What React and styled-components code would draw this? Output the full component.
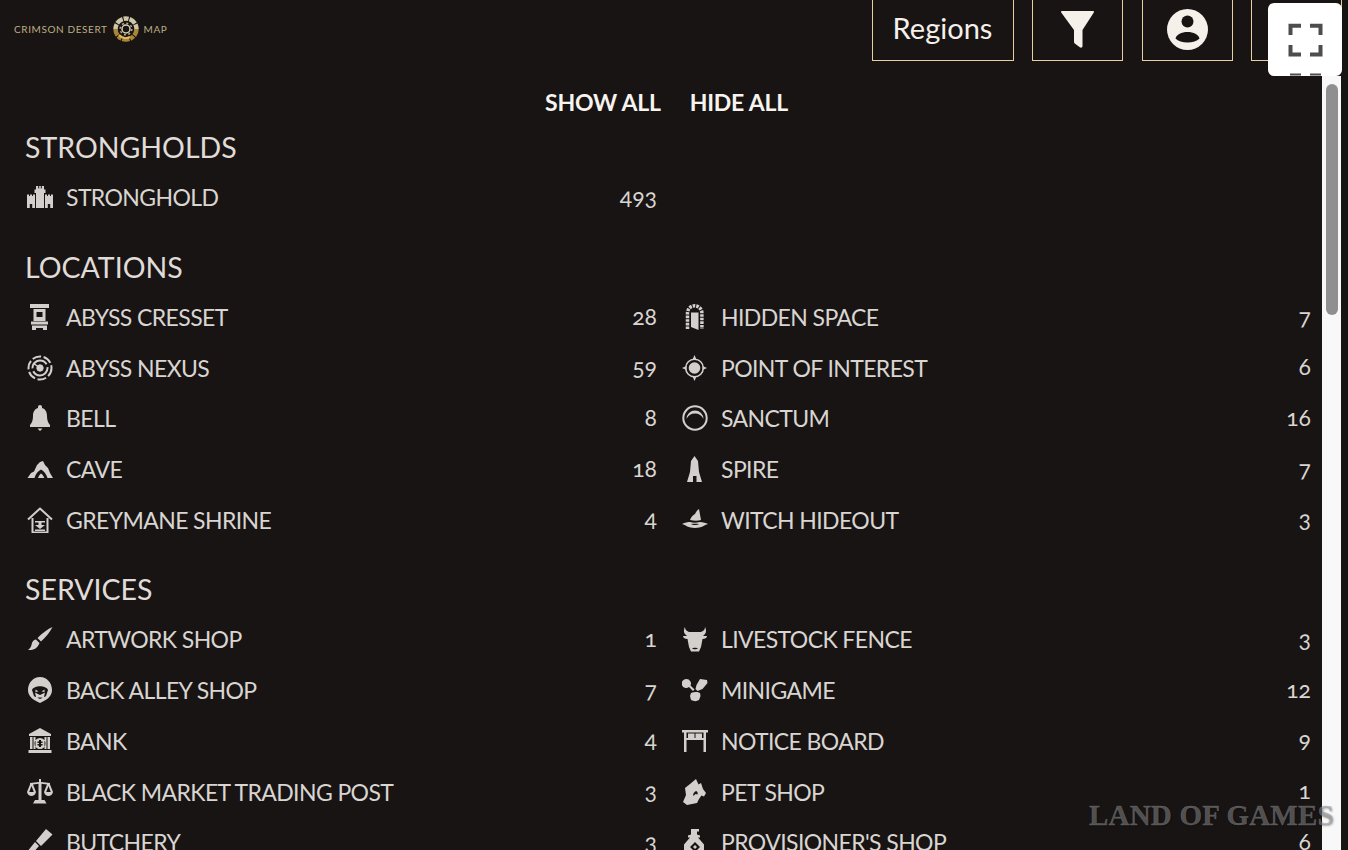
// App.jsx
import React from 'react';
import styled, { createGlobalStyle } from 'styled-components';

const GlobalStyle = createGlobalStyle`
  html, body {
    margin: 0;
    height: 100%;
    background: #181414;
    overflow: hidden;
  }
`;

const icons = {
  stronghold: (
    <path d="M9 2h2.200v2.500h1V2h1.600v2.500h1V2H17v3.500h1.500V9H17v15H9V9H7.500V5.500H9zM0 10.500h2v1.500h1v-1.500h2V12h1v-1.500h2V24H5.200v-4H2.800v4H0zM18 10.500h2V12h1v-1.500h2V12h1v-1.500h2V24h-2.800v-4h-2.400v4H18z" />
  ),
  cresset: (
    <path d="M3 0h19v4H3zM6.500 5h12v12h-12zM9.500 8v5h6V8zM4 17.500h17v3h-17zM5 21.500h15V26h-4v-2h-7v2H5z" fillRule="evenodd" />
  ),
  nexus: (
    <g fill="none" stroke="currentColor">
      <circle cx="13" cy="13" r="11.500" strokeWidth="2" strokeDasharray="9 2.500" />
      <circle cx="13" cy="13" r="7.500" strokeWidth="2" strokeDasharray="20 3" />
      <circle cx="13" cy="13" r="3.200" fill="currentColor" strokeWidth="1" />
      <path d="M13 13 L6 8" strokeWidth="1.500" />
    </g>
  ),
  bell: (
    <path d="M13 0c1.200 0 2 .8 2 2v1c3.500 1 5 4 5 8 0 4 1 7 3 9v2H3v-2c2-2 3-5 3-9 0-4 1.500-7 5-8V2c0-1.200.8-2 2-2zM10.500 23.500h5L13 26z" />
  ),
  cave: (
    <path d="M0.500 22L4 17l3-1.500L10 9l3-3 3-1 2 4 3 3 2 5 3 5h-5.500c-1-3.500-3.500-7-6.500-8.500-3 1.500-5.500 4.500-6.500 8.500zM11 22c.5-1.800 1.800-3.500 3-4.500 1.500 1 2.800 2.700 3.300 4.500z" />
  ),
  shrine: (
    <g>
      <path d="M1 12.500L13 1.500l12 11" fill="none" stroke="currentColor" strokeWidth="2" />
      <path d="M5.500 11v14.500h15V11" fill="none" stroke="currentColor" strokeWidth="2" />
      <path d="M8 14h10v1.500h-3.500V18H18l-5 4-5-4h3.500v-2.500H8zM8 22.500h10V24H8z" />
    </g>
  ),
  hidden: (
    <g>
      <path d="M5.500 25V9a7.200 7.200 0 0 1 14.400 0v16" fill="none" stroke="currentColor" strokeWidth="3.500" strokeDasharray="2.600 1" />
      <path d="M9 8.500h7.500V26L9 23z" />
    </g>
  ),
  poi: (
    <g>
      <circle cx="12.500" cy="13" r="5.800" />
      <circle cx="12.500" cy="13" r="8.800" fill="none" stroke="currentColor" strokeWidth="1.500" />
      <path d="M12.500 0l2 4.500h-4zM12.500 26l-2-4.500h4zM0 13l4.500-2v4zM25 13l-4.500 2v-4z" />
    </g>
  ),
  sanctum: (
    <g>
      <circle cx="13" cy="13" r="11.700" fill="none" stroke="currentColor" strokeWidth="2" />
      <path d="M4.500 14a8.500 8.500 0 0 1 17 0c-1.500-3.500-4.500-5.500-8.500-5.500S6 10.500 4.500 14z" />
    </g>
  ),
  spire: (
    <path d="M12.500 0L16 5l1 11 3 10h-5.500v-6h-3.500v6H5l3-10 1-11z" />
  ),
  witch: (
    <g>
      <path d="M17 2l2 11c-3 1-7 1-11 0 1-3 3-5 5-6 1-2 2-4 4-5z" />
      <path d="M0 17c3-1.500 6-2 8-2 3 1 6 1 10 0 3 0 6 1 8 2-4 1-6 4-13 4S4 18 0 17zM9 17c2 1.300 6 1.300 8 0-3-.5-5-.5-8 0z" fillRule="evenodd" />
    </g>
  ),
  brush: (
    <path d="M25.500 1C21 3 15 7 10.500 12l3.500 3.500C19 11 23 6 25.500 1zM9 13.500c-3.500.5-4 3.500-4.500 5.500-.5 2-2 4-3.500 5 4 .5 9-.5 11.500-7z" />
  ),
  alley: (
    <path d="M13 0c7 0 12 6 12 13 0 6-5 10-12 13C6 23 1 19 1 13 1 6 6 0 13 0zM5 13c2-5 14-5 16 0l-2 6c-2 2-10 2-12 0zM8 15.500l5 2.500 5-2.500-1 4.500-4 2-4-2zM8.500 12.500l3 2-3 .5zM17.500 12.500l-3 2 3 .5z" fillRule="evenodd" />
  ),
  bank: (
    <path d="M13 0l11 6v2H2V6zM3 9h2.500v12H3zM20.500 9H23v12h-2.500zM13 10a5.500 5.500 0 1 1 0 11 5.500 5.500 0 0 1 0-11zM12 12v1.500h-1.500V15H12v1h-1.500v1.500H12V19h2v-1.500h1.500V16H14v-1h1.500v-1.500H14V12zM6.500 9h2v12h-2zM17.500 9h2v12h-2zM1.500 22h23v3h-23z" fillRule="evenodd" />
  ),
  scales: (
    <path d="M12 0h2v3l9 1v1.500l3 7.500c-.5 2.500-2.500 4-4.500 4S17.500 15.500 17 13l3-7.500-5.500-.7V21h3l2 3.500H6L8 21h3.500V4.800L6 5.500 9 13c-.5 2.500-2.500 4-4.500 4S.5 15.500 0 13l3-7.500V4l9-1zM4.500 7L2.200 13h4.600zM21.500 7l-2.300 6h4.600z" fillRule="evenodd" />
  ),
  cleaver: (
    <path d="M19 0l6.500 5.500L14 17l-5-5zM8 13l4 4-8 9H0v-3z" />
  ),
  bull: (
    <path d="M3 1c0 2 1 4 4 5h12c3-1 4-3 4-5 1.500 3 1.500 6-1 8l-1 1h4c0 2-2 3-4.500 3L19 21l-2 4.500H9L7 21l-1.500-8C3 13 1 12 1 10h4L4 9C1.500 7 1.500 4 3 1zM10 22.500c1 1 5 1 6 0-1-1-5-1-6 0z" fillRule="evenodd" />
  ),
  minigame: (
    <path d="M4.500 2a4.500 4.500 0 0 1 4 6.500l4 4-1.500 1.500-4-4A4.500 4.500 0 1 1 4.500 2zM18 2l7 1 .5 3-5 6-5 2-2-2 1-4zM9 16c3-1.500 7-1.500 9 0l.5 3-1.500 4c-2.500 1.500-5 1.500-8 0l-1-4z" />
  ),
  notice: (
    <path d="M0 2h26v2.500h-2V24h-2.500V12h-17v12H2V4.500H0zM4.500 4.500V10h17V4.500zM6 5.500h6.500V10H6zM13.500 5.500H20V10h-6.500z" fillRule="evenodd" />
  ),
  pet: (
    <path d="M14 0l2.500 5.500L19 4l2 6 3 4-2 3.500-2.500-1L17 20l-2 4-10 2-4-3 3-7-1-7 5-4zM14 12c-2 1-3.500 3-2.500 5l2-2 2 .5c.5-2 0-3-1.500-3.500z" fillRule="evenodd" />
  ),
  bag: (
    <path d="M9 0h8v2.500h-2v3l3 1v2h-2l6 7v6l-3 4.500H5L2 21.500v-6l6-7H6v-2l3-1v-3H9zM13 13l-5 5 5 5 5-5zM13 16l2 2-2 2-2-2z" fillRule="evenodd" />
  ),
};

const sections = [
  {
    title: 'STRONGHOLDS',
    rows: [['stronghold', 'STRONGHOLD', '493']],
  },
  {
    title: 'LOCATIONS',
    rows: [
      ['cresset', 'ABYSS CRESSET', '28'],
      ['hidden', 'HIDDEN SPACE', '7'],
      ['nexus', 'ABYSS NEXUS', '59'],
      ['poi', 'POINT OF INTEREST', '6'],
      ['bell', 'BELL', '8'],
      ['sanctum', 'SANCTUM', '16'],
      ['cave', 'CAVE', '18'],
      ['spire', 'SPIRE', '7'],
      ['shrine', 'GREYMANE SHRINE', '4'],
      ['witch', 'WITCH HIDEOUT', '3'],
    ],
  },
  {
    title: 'SERVICES',
    rows: [
      ['brush', 'ARTWORK SHOP', '1'],
      ['bull', 'LIVESTOCK FENCE', '3'],
      ['alley', 'BACK ALLEY SHOP', '7'],
      ['minigame', 'MINIGAME', '12'],
      ['bank', 'BANK', '4'],
      ['notice', 'NOTICE BOARD', '9'],
      ['scales', 'BLACK MARKET TRADING POST', '3'],
      ['pet', 'PET SHOP', '1'],
      ['cleaver', 'BUTCHERY', '3'],
      ['bag', "PROVISIONER'S SHOP", '6'],
    ],
  },
];

const App = () => {
  return (
    <Page>
      <GlobalStyle />
      <Header>
        <Logo>
          <LogoText>CRIMSON DESERT</LogoText>
          <Medallion viewBox="0 0 26 26" fill="none">
            <path d="M2.500 13a10.500 10.500 0 0 1 21 0" stroke="#cfc6a8" strokeWidth="4.500" strokeDasharray="5 1 7 1" />
            <path d="M23.500 13a10.500 10.500 0 0 1-21 0" stroke="#a88636" strokeWidth="4.500" strokeDasharray="7 1 4 1" />
            <path d="M6 19a9 9 0 0 0 11 2" stroke="#e2b85a" strokeWidth="2" />
            <circle cx="13" cy="13" r="4" stroke="#d8ceb0" strokeWidth="1.500" />
            <circle cx="13" cy="13" r="5.800" stroke="#b8ac8a" strokeWidth="1.500" strokeDasharray="2 2.500" />
          </Medallion>
          <LogoText>MAP</LogoText>
        </Logo>
        <Nav>
          <NavButton $wide>Regions</NavButton>
          <NavButton>
            <svg width="33" height="37" viewBox="0 0 33 37" fill="#f5f0ea">
              <path d="M1 0h31c.8 0 1.200.8.8 1.500L21.500 19v16c0 1.500-1.500 2.200-2.700 1.200l-5-3.700c-.6-.5-.8-1-.8-1.700V19L.2 1.500C-.2.800.2 0 1 0z" />
            </svg>
          </NavButton>
          <NavButton>
            <svg width="41" height="41" viewBox="0 0 41 41">
              <circle cx="20.500" cy="20.500" r="20.500" fill="#f5f0ea" />
              <circle cx="20.500" cy="12.500" r="6" fill="#181414" />
              <path d="M8.500 29.500c1-4 6-6.500 12-6.500s11 2.500 12 6.500c-2.500 2.500-7 4-12 4s-9.500-1.500-12-4z" fill="#181414" />
            </svg>
          </NavButton>
          <NavButton />
        </Nav>
      </Header>
      <Body>
        <Content>
          <Toggles>
            <Toggle>SHOW ALL</Toggle>
            <Toggle>HIDE ALL</Toggle>
          </Toggles>
          {sections.map((section) => (
            <Section key={section.title}>
              <Heading>{section.title}</Heading>
              <Grid>
                {section.rows.map(([icon, name, count]) => (
                  <Row key={name}>
                    <IconSvg viewBox="0 0 26 26">{icons[icon]}</IconSvg>
                    <Name>{name}</Name>
                    <Count>{count}</Count>
                  </Row>
                ))}
              </Grid>
            </Section>
          ))}
        </Content>
        <ScrollTrack>
          <ScrollThumb />
        </ScrollTrack>
      </Body>
      <FullscreenButton>
        <svg width="74" height="73" viewBox="0 0 74 73" fill="none" stroke="#4d4d4d" strokeWidth="4">
          <path d="M22.500 32V22.800H33M42 22.800h10.500V32M22.500 42v9.500H33M42 51.500h10.500V42" />
          <path d="M22 71.500h11M42 71.500h11" strokeWidth="2" />
        </svg>
      </FullscreenButton>
      <Watermark>LAND OF GAMES</Watermark>
    </Page>
  );
};

export default App;

const Page = styled.div`
  position: relative;
  height: 850px;
  width: 1348px;
  overflow: hidden;
  display: flex;
  flex-direction: column;
  background: #181414;
  font-family: Lato, "Liberation Sans", sans-serif;
  color: #d9d5d1;
`;

const Header = styled.header`
  height: 61px;
  flex: none;
  display: flex;
  justify-content: space-between;
  padding: 0 6px 0 14px;
`;

const Logo = styled.div`
  display: flex;
  align-items: center;
  height: 57px;
  gap: 5px;
`;

const LogoText = styled.span`
  font-size: 10px;
  letter-spacing: 0.600px;
  color: #bfae84;
  white-space: nowrap;
`;

const Medallion = styled.svg`
  width: 26px;
  height: 26px;
`;

const Nav = styled.nav`
  display: flex;
  gap: 18.500px;
`;

const NavButton = styled.div`
  width: ${(p) => (p.$wide ? '142px' : '91px')};
  box-sizing: border-box;
  display: flex;
  align-items: center;
  justify-content: center;
  border: 1px solid #e8cfa0;
  border-top: 0;
  padding-bottom: ${(p) => (p.$wide ? '6px' : '2px')};
  font-size: 29px;
  color: #f5f0ea;
`;

const Body = styled.div`
  flex: 1;
  display: flex;
  min-height: 0;
  padding-right: 7px;
`;

const Content = styled.main`
  flex: 1;
  min-width: 0;
  padding: 23px 11px 0 25px;
  overflow: hidden;
`;

const Toggles = styled.div`
  display: flex;
  justify-content: center;
  gap: 29px;
  height: 36px;
  margin-bottom: 2px;
  align-items: center;
  padding-right: 3px;
`;

const Toggle = styled.span`
  font-size: 23px;
  font-weight: 700;
  letter-spacing: -0.200px;
  color: #f7f3ef;
`;

const Section = styled.section`
  margin-bottom: 19px;
`;

const Heading = styled.h2`
  margin: 0;
  height: 50px;
  display: flex;
  align-items: center;
  font-size: 28.500px;
  font-weight: 400;
  color: #e0dcd8;
`;

const Grid = styled.div`
  display: grid;
  grid-template-columns: 632px 631px;
  column-gap: 23px;
  grid-auto-rows: 50.700px;
`;

const Row = styled.div`
  display: flex;
  align-items: center;
  padding-left: 2px;
`;

const IconSvg = styled.svg`
  width: 26px;
  height: 26px;
  flex: none;
  fill: currentColor;
  color: #d3cfcc;
  margin-right: 13px;
`;

const Name = styled.span`
  font-size: 23px;
  letter-spacing: -0.600px;
  color: #d9d5d1;
  white-space: nowrap;
`;

const Count = styled.span`
  margin-left: auto;
  padding-bottom: 3px;
  font-size: 23px;
  font-feature-settings: "onum";
  color: #d9d5d1;
`;

const ScrollTrack = styled.div`
  width: 19px;
  flex: none;
  background: #f8f8f8;
  margin-top: 15px;
  padding: 8px 3.500px 0;
  box-sizing: border-box;
`;

const ScrollThumb = styled.div`
  height: 231px;
  background: #8f8f8f;
  border-radius: 6px;
`;

const FullscreenButton = styled.button`
  position: absolute;
  top: 3px;
  left: 1268px;
  width: 74px;
  height: 73px;
  padding: 0;
  border: 0;
  border-radius: 6px;
  background: #fff;
  overflow: hidden;
  svg { display: block; }
`;

const Watermark = styled.div`
  position: absolute;
  top: 799px;
  left: 1089px;
  font-family: "Liberation Serif", serif;
  font-weight: 700;
  font-size: 29px;
  letter-spacing: 0.200px;
  white-space: nowrap;
  color: rgba(146, 146, 146, 0.5);
  -webkit-text-stroke: 0.400px rgba(146, 146, 146, 0.5);
  text-shadow: 1px 1px 2px rgba(0, 0, 0, 0.3);
`;
